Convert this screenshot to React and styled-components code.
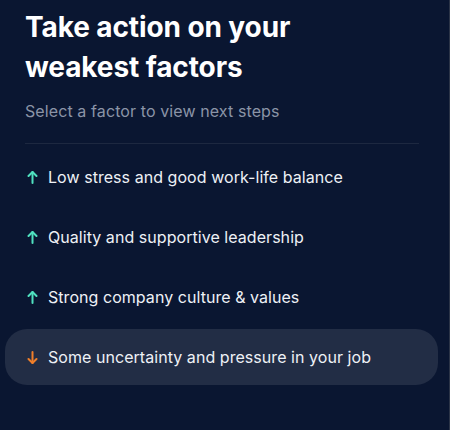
import styled, { createGlobalStyle } from 'styled-components';

const GlobalStyle = createGlobalStyle`
  html, body {
    margin: 0;
    background: #0a1631;
  }
  body {
    font-family: Inter, "Noto Sans", sans-serif;
  }
`;

const Panel = styled.section`
  box-sizing: border-box;
  width: 450px;
  height: 430px;
  padding: 7px 30px 0 25px;
  background: #0a1631;
  border-right: 1px solid #2b3447;
  color: #f1f3f7;
`;

const Title = styled.h1`
  max-width: 320px;
  margin: 0;
  font-size: 28px;
  line-height: 40px;
  font-weight: 700;
  letter-spacing: -0.1px;
  color: #ffffff;
`;

const Subtitle = styled.p`
  margin: 12px 0 0;
  font-size: 16px;
  line-height: 24px;
  letter-spacing: 0.1px;
  color: #8b94a7;
`;

const Divider = styled.hr`
  margin: 20px 0 5px;
  border: 0;
  border-top: 1px solid #1d2840;
`;

const List = styled.ul`
  display: flex;
  flex-direction: column;
  gap: 4px;
  margin: 0 -19px 0 -20px;
  padding: 0;
  list-style: none;
`;

const Row = styled.li`
  display: flex;
  align-items: center;
  gap: 10px;
  height: 56px;
  padding-left: 22px;
  border-radius: 22px;
  background: ${p => (p.$active ? '#222d45' : 'transparent')};
  font-size: 16px;
  letter-spacing: 0.05px;
  color: #eef1f6;
  cursor: pointer;
`;

const Arrow = ({ down }) => (
  <svg width="11" height="13" viewBox="0 0 11 13" fill="none"
    stroke={down ? '#f07f2a' : '#4fe0bf'} strokeWidth="2"
    strokeLinecap="round" strokeLinejoin="round">
    {down ? (
      <>
        <path d="M5.5 1v11" />
        <path d="M1.5 8l4 4 4-4" />
      </>
    ) : (
      <>
        <path d="M5.5 12V1" />
        <path d="M1.5 5l4-4 4 4" />
      </>
    )}
  </svg>
);

const factors = [
  { text: 'Low stress and good work-life balance', down: false },
  { text: 'Quality and supportive leadership', down: false },
  { text: 'Strong company culture & values', down: false },
  { text: 'Some uncertainty and pressure in your job', down: true },
];

export default function App() {
  return (
    <>
      <GlobalStyle />
      <Panel>
        <Title>Take action on your weakest factors</Title>
        <Subtitle>Select a factor to view next steps</Subtitle>
        <Divider />
        <List>
          {factors.map(f => (
            <Row key={f.text} $active={f.down}>
              <Arrow down={f.down} />
              {f.text}
            </Row>
          ))}
        </List>
      </Panel>
    </>
  );
}
